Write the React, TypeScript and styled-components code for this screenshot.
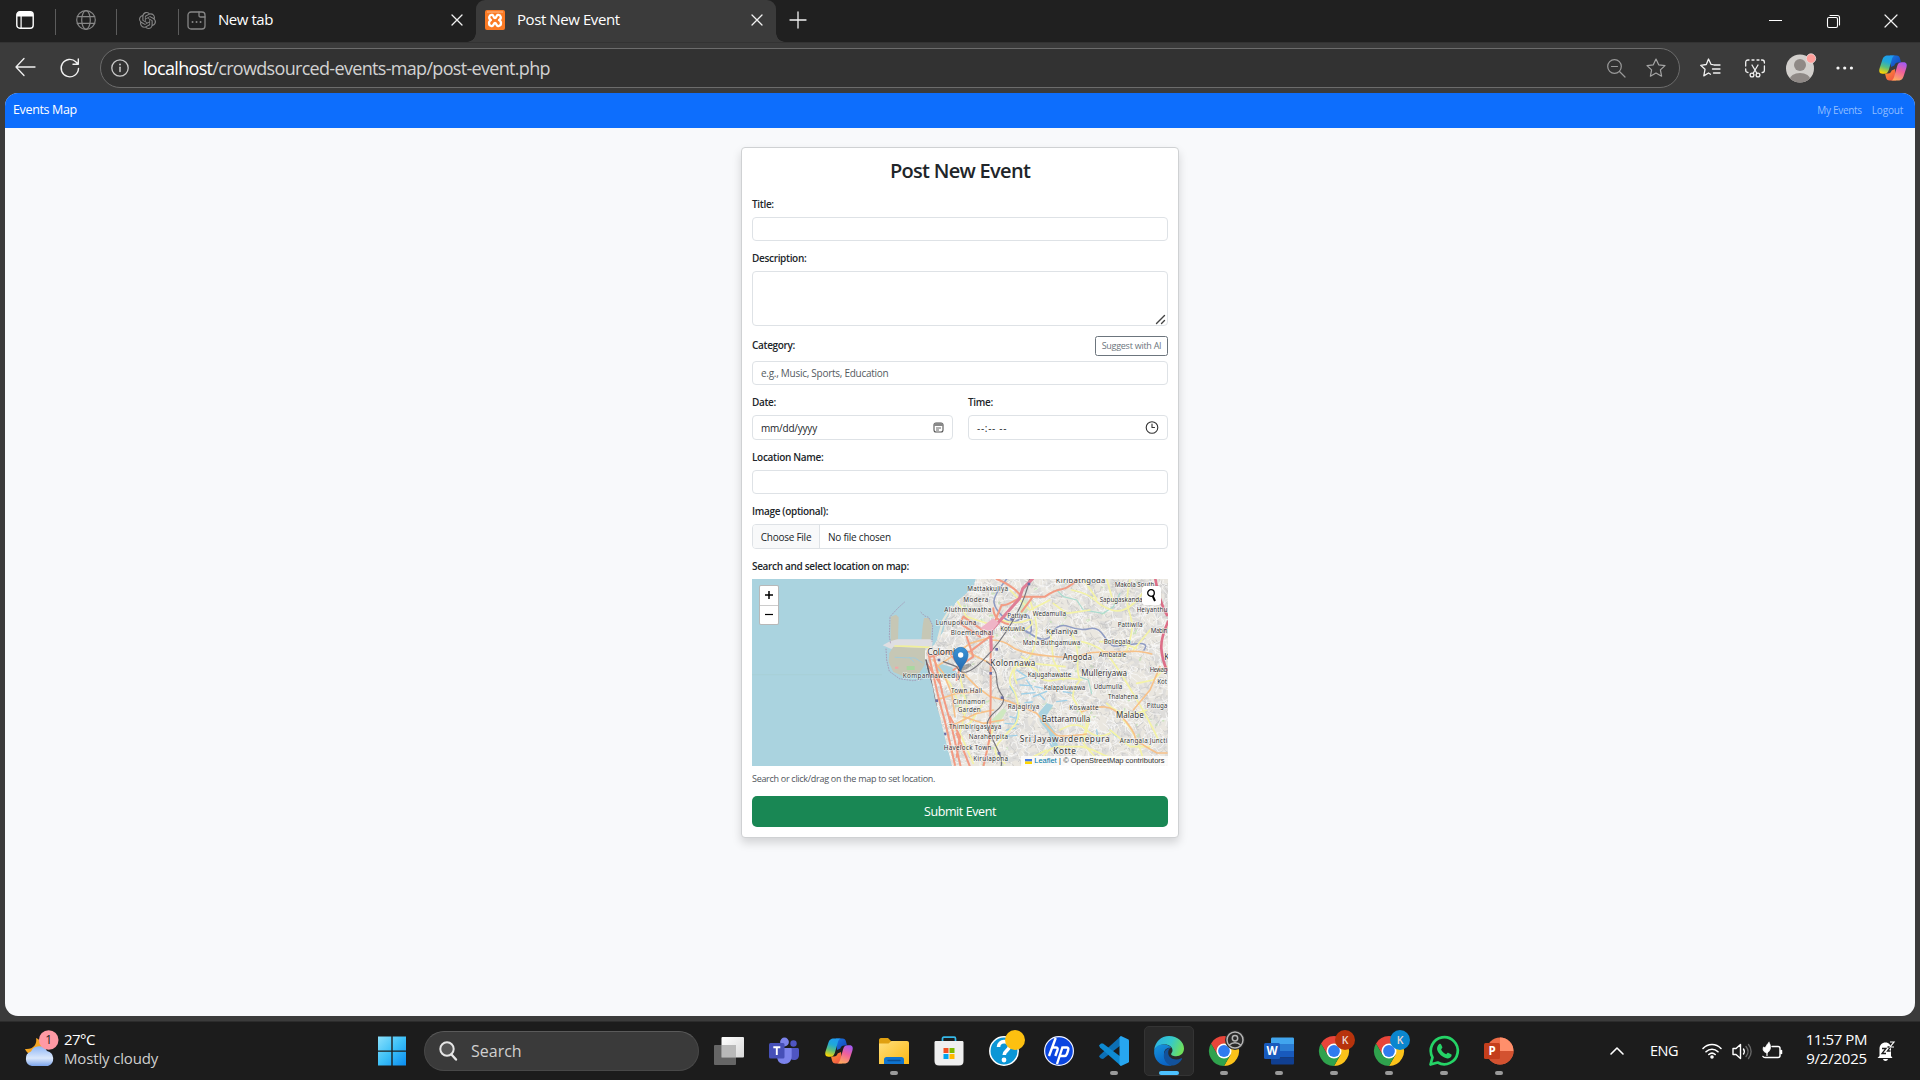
import React from 'react';
import styled, { createGlobalStyle, css } from 'styled-components';
import { SiOpenai } from 'react-icons/si';

const ui = `"Open Sans", "Noto Sans", sans-serif`;

const GlobalStyle = createGlobalStyle`
  * { box-sizing: border-box; }
  html, body { margin: 0; padding: 0; background: #3b3b3b; }
  body { font-family: ${ui}; overflow: hidden; }
  svg { display: block; flex: none; overflow: visible; }
`;

/* ---------- shell ---------- */

const Screen = styled.div`
  width: 1920px;
  height: 1080px;
  display: flex;
  flex-direction: column;
  background: #3b3b3b;
  overflow: hidden;
`;

const Text = styled.span<{ $size: number; $ls?: number; $color?: string; $weight?: number }>`
  font-size: ${p => p.$size}px;
  letter-spacing: ${p => p.$ls ?? 0}px;
  color: ${p => p.$color ?? '#fff'};
  font-weight: ${p => p.$weight ?? 400};
  line-height: 1.3;
  white-space: nowrap;
`;

/* ---------- tab strip ---------- */

const TabStrip = styled.header`
  height: 42px;
  flex: none;
  display: flex;
  align-items: stretch;
  background: #202020;
`;

const PinnedTab = styled.div<{ $w: number; $pad: number }>`
  width: ${p => p.$w}px;
  padding: 0 0 2px ${p => p.$pad}px;
  display: flex;
  align-items: center;
`;

const Divider = styled.i`
  width: 1px;
  height: 26px;
  margin-top: 9px;
  background: #5c5c5c;
`;

const Tab = styled.div<{ $active?: boolean; $w: number }>`
  width: ${p => p.$w}px;
  display: flex;
  align-items: center;
  padding: 0 14px 2px ${p => (p.$active ? 9 : 8)}px;
  gap: 12px;
  position: relative;
  ${p => p.$active && css`
    background: #3b3b3b;
    border-radius: 9px 9px 0 0;
    &::before, &::after {
      content: '';
      position: absolute;
      bottom: 0;
      width: 9px;
      height: 9px;
    }
    &::before { left: -9px; background: radial-gradient(circle at 0 0, transparent 8.5px, #3b3b3b 9px); }
    &::after { right: -9px; background: radial-gradient(circle at 100% 0, transparent 8.5px, #3b3b3b 9px); }
  `}
`;

const TabTitle = styled(Text)`flex: 1;`;

const NewTab = styled.div`
  padding: 0 0 3px 14px;
  display: flex;
  align-items: center;
  flex: 1;
`;

const WindowControls = styled.div`
  display: flex;
  align-items: center;
  gap: 45px;
  padding-right: 23px;
`;

/* ---------- toolbar ---------- */

const Toolbar = styled.div`
  height: 51px;
  flex: none;
  display: flex;
  align-items: center;
  padding-left: 15px;
  border-top: 1px solid #333;
`;

const NavButtons = styled.div`
  width: 85px;
  display: flex;
  gap: 25px;
`;

const AddressBar = styled.div`
  width: 1580px;
  height: 40px;
  border: 1px solid #6c6c6c;
  border-radius: 20px;
  background: #323232;
  display: flex;
  align-items: center;
  padding: 0 13px 0 10px;
`;

const Url = styled.span`
  flex: 1;
  padding: 0 0 1px 14px;
  font-size: 18px;
  letter-spacing: -0.68px;
  color: #d2d2d2;
  line-height: 24px;
  b { font-weight: 400; color: #fff; }
`;

const AddressTools = styled.div`
  display: flex;
  align-items: center;
  gap: 20px;
`;

const ToolbarTools = styled.div`
  display: flex;
  align-items: center;
  padding-left: 20px;
`;

const ToolSlot = styled.div<{ $w: number }>`
  width: ${p => p.$w}px;
  display: flex;
`;

/* ---------- web page ---------- */

const Viewport = styled.main`
  width: 1910px;
  height: 923px;
  margin-left: 5px;
  flex: none;
  display: flex;
  flex-direction: column;
  align-items: center;
  background: #f8f9fb;
  border-radius: 13px;
  overflow: hidden;
`;

const Navbar = styled.nav`
  width: 100%;
  height: 35px;
  flex: none;
  display: flex;
  align-items: center;
  justify-content: space-between;
  padding: 0 12px 0 8px;
  background: #0d6efd;
`;

const NavLinks = styled.div`
  display: flex;
  gap: 10px;
`;

const Card = styled.form`
  width: 438px;
  height: 691px;
  margin-top: 19px;
  padding: 10px;
  display: flex;
  flex-direction: column;
  background: #fff;
  border: 1px solid #cfd1d3;
  border-radius: 4px;
  box-shadow: 0 5px 10px rgba(0, 0, 0, 0.15);
`;

const Heading = styled.h1`
  margin: 0 0 16px;
  height: 24px;
  font-size: 20px;
  font-weight: 600;
  line-height: 25px;
  letter-spacing: -0.7px;
  text-align: center;
  color: #212529;
`;

const Field = styled.div<{ $gap?: number }>`
  display: flex;
  flex-direction: column;
  margin-bottom: ${p => p.$gap ?? 11}px;
`;

const Label = styled.label<{ $flush?: boolean }>`
  height: 14px;
  margin-bottom: ${p => (p.$flush ? 0 : 5)}px;
  font-size: 10px;
  font-weight: 600;
  line-height: 13px;
  letter-spacing: -0.32px;
  color: #212529;
  white-space: nowrap;
`;

const Control = styled.div<{ $h?: number }>`
  height: ${p => p.$h ?? 24}px;
  display: flex;
  align-items: center;
  justify-content: space-between;
  padding: 0 8px;
  border: 1px solid #dee2e6;
  border-radius: 4px;
  background: #fff;
`;

const TextArea = styled(Control)`
  align-items: flex-end;
  justify-content: flex-end;
  padding: 0 2px 1px;
`;

const LabelRow = styled.div`
  height: 20px;
  margin-bottom: 5px;
  display: flex;
  align-items: center;
  justify-content: space-between;
`;

const SuggestButton = styled.div`
  width: 73px;
  height: 20px;
  border: 1px solid #6c757d;
  border-radius: 2.5px;
  display: flex;
  align-items: center;
  justify-content: center;
`;

const Columns = styled.div`
  display: grid;
  grid-template-columns: 201px 200px;
  gap: 15px;
`;

const ControlText = styled(Text)`
  padding-top: 1px;
`;

const FileControl = styled(Control)`
  padding: 0;
  justify-content: flex-start;
  overflow: hidden;
`;

const FileButton = styled.div`
  width: 67px;
  height: 100%;
  display: flex;
  align-items: center;
  justify-content: center;
  background: #f8f9fa;
  border-right: 1px solid #dee2e6;
  margin-right: 8px;
`;

const MapFrame = styled.div`
  width: 416px;
  height: 187px;
  margin-top: 5px;
  position: relative;
  overflow: hidden;
`;

const ZoomControl = styled.div`
  position: absolute;
  left: 7px;
  top: 6px;
  width: 20px;
  height: 40px;
  display: flex;
  flex-direction: column;
  border: 1px solid rgba(0, 0, 0, 0.28);
  border-radius: 2px;
  background: #fff;
`;

const ZoomButton = styled.div`
  flex: 1;
  display: flex;
  align-items: center;
  justify-content: center;
  & + & { border-top: 1px solid #ccc; }
`;

const SearchControl = styled.div`
  position: absolute;
  right: 7px;
  top: 7px;
  width: 19px;
  height: 19px;
  border-radius: 2px;
  background: #fff;
  display: flex;
  align-items: center;
  justify-content: center;
  box-shadow: 0 0 1px rgba(0, 0, 0, 0.5);
`;

const Attribution = styled.div`
  position: absolute;
  right: 0;
  bottom: 0;
  height: 10px;
  width: 147px;
  display: flex;
  align-items: center;
  gap: 2.3px;
  padding-left: 4px;
  background: rgba(255, 255, 255, 0.8);
  font: 7.5px/10px "Liberation Sans", Arial, sans-serif;
  letter-spacing: -0.02px;
  color: #333;
  white-space: nowrap;
  a { color: #0078a8; }
`;

const Help = styled.small`
  margin-bottom: 10px;
  height: 14px;
  font-size: 9px;
  line-height: 14px;
  letter-spacing: -0.29px;
  color: #50565c;
`;

const Submit = styled.div`
  height: 31px;
  padding-top: 1px;
  border-radius: 5px;
  background: #198754;
  display: flex;
  align-items: center;
  justify-content: center;
`;

/* ---------- taskbar ---------- */

const Taskbar = styled.footer`
  height: 59px;
  margin-top: 5px;
  flex: none;
  display: flex;
  align-items: center;
  background: #1c1c1c;
  border-top: 1px solid #2c2c2c;
`;

const Weather = styled.div`
  width: 353px;
  padding: 0 0 4px 24px;
  display: flex;
  align-items: center;
  gap: 8px;
`;

const Lines = styled.div<{ $right?: boolean }>`
  display: flex;
  flex-direction: column;
  align-items: ${p => (p.$right ? 'flex-end' : 'flex-start')};
`;

const ClockLines = styled(Lines)`
  margin-top: -4px;
`;

const StartButton = styled.div`
  width: 71px;
  padding-left: 24px;
`;

const SearchPill = styled.div`
  width: 275px;
  height: 40px;
  border-radius: 20px;
  background: #3a3a3a;
  border: 1px solid #484848;
  border-top-color: #5a5a5a;
  display: flex;
  align-items: center;
  gap: 13px;
  padding-left: 14px;
`;

const Apps = styled.div`
  display: flex;
  margin-left: 5px;
`;

const AppSlot = styled.div<{ $active?: boolean }>`
  width: 50px;
  height: 50px;
  margin-right: 5px;
  padding-top: 9px;
  border-radius: 5px;
  border: 1px solid ${p => (p.$active ? '#343434' : 'transparent')};
  background: ${p => (p.$active ? '#292929' : 'transparent')};
  display: flex;
  flex-direction: column;
  align-items: center;
  gap: 5px;
`;

const Running = styled.i<{ $active?: boolean }>`
  width: ${p => (p.$active ? 20 : 8)}px;
  height: 4px;
  border-radius: 2px;
  background: ${p => (p.$active ? '#4cc2ff' : '#9a9a9a')};
`;

const Tray = styled.div`
  margin-left: auto;
  display: flex;
  align-items: center;
  padding-right: 25px;
`;

const TraySlot = styled.div<{ $w: number; $end?: boolean }>`
  width: ${p => p.$w}px;
  display: flex;
  align-items: center;
  justify-content: ${p => (p.$end ? 'flex-end' : 'flex-start')};
  padding-right: ${p => (p.$end ? 10 : 0)}px;
`;

/* ---------- small icons ---------- */

const line = (color: string, w = 1.3) => ({
  fill: 'none', stroke: color, strokeWidth: w, strokeLinecap: 'round' as const, strokeLinejoin: 'round' as const,
});

const CloseIcon = ({ s = 10, w = 1.3 }) => (
  <svg width={s} height={s} viewBox="0 0 10 10" {...line('#f2f2f2', w)}><path d="M0 0 10 10M10 0 0 10" /></svg>
);

const TabActionsIcon = () => (
  <svg width="18" height="18" viewBox="0 0 18 18">
    <rect x=".8" y=".8" width="16.4" height="16.4" rx="3" {...line('#fff', 1.4)} />
    <path d="M1 3.500C1 2 2 1 3.500 1h11C16 1 17 2 17 3.500V5.500H1zM4.500 5h1.200v12h-1.200z" fill="#fff" />
  </svg>
);

const GlobeIcon = () => (
  <svg width="20" height="20" viewBox="0 0 20 20" {...line('#868686', 1.2)}>
    <circle cx="10" cy="10" r="9.300" /><ellipse cx="10" cy="10" rx="4.300" ry="9.300" /><path d="M1.300 6.700h17.400M1.300 13.300h17.400" />
  </svg>
);

const PageIcon = () => (
  <svg width="19" height="19" viewBox="0 0 19 19" {...line('#868686', 1.3)}>
    <rect x="1" y="1" width="17" height="17" rx="3" /><path d="M12 1v3.500C12 5.500 12.500 6 13.500 6H18" />
    <path d="M5.500 11h.1M9.500 11h.1M13.500 11h.1" strokeWidth="1.900" />
  </svg>
);

const XamppIcon = () => (
  <svg width="20" height="20" viewBox="0 0 20 20">
    <rect width="20" height="20" rx="2" fill="#fb7a24" /><path d="M2 2h16" stroke="#fdb98b" strokeWidth="1" />
    <path d="M7.300 5C4 4.500 3 8.500 6 10c-3 1.500-2.500 6.500 1 6 2-.3 1.500-3 3-3s1 2.700 3 3c3.500.5 4-4.500 1-6 3-1.500 2-5.500-1.300-5C11 5.300 11.700 8 10 8S9 5.300 7.300 5z" {...line('#fff', 2.3)} />
  </svg>
);

const InfoIcon = () => (
  <svg width="18" height="18" viewBox="0 0 18 18" {...line('#c9c9c9', 1.3)}>
    <circle cx="9" cy="9" r="8.200" /><path d="M9 8.300v4.200" strokeWidth="1.500" /><path d="M9 5.500v.1" strokeWidth="1.900" />
  </svg>
);

const star = 'M10 1l2.700 5.800 6.300.8-4.600 4.300 1.200 6.300L10 15.100l-5.600 3.100 1.200-6.300L1 7.600l6.300-.8z';

const AvatarIcon = () => (
  <svg width="32" height="30" viewBox="0 0 32 30">
    <clipPath id="av"><circle cx="14" cy="15.500" r="14" /></clipPath>
    <circle cx="14" cy="15.500" r="14" fill="#d2cfcc" />
    <g clipPath="url(#av)" fill="#8f8986"><circle cx="14" cy="12" r="6" /><ellipse cx="14" cy="27" rx="10.500" ry="7" /></g>
    <circle cx="25" cy="5.500" r="4.700" fill="#ff9f9b" stroke="#e6dede" strokeWidth=".8" />
  </svg>
);

const CopilotIcon = ({ id }: { id: string }) => (
  <svg width="28" height="26" viewBox="0 0 28 26">
    <defs>
      <linearGradient id={id + 'a'} x1=".6" y1="0" x2=".3" y2="1"><stop stopColor="#1f9cf0" /><stop offset=".35" stopColor="#20a8d8" /><stop offset=".65" stopColor="#5bbf7c" /><stop offset="1" stopColor="#ffd500" /></linearGradient>
      <linearGradient id={id + 'b'} x1=".7" y1="0" x2=".3" y2="1"><stop stopColor="#a55af0" /><stop offset=".45" stopColor="#f0609a" /><stop offset="1" stopColor="#ffae5c" /></linearGradient>
      <linearGradient id={id + 'c'} x1="0" y1="0" x2="1" y2="1"><stop stopColor="#1a78e0" /><stop offset="1" stopColor="#1540b8" /></linearGradient>
      <linearGradient id={id + 'd'} x1="0" y1="0" x2="1" y2="1"><stop stopColor="#ff9a2e" /><stop offset="1" stopColor="#ef4a4a" /></linearGradient>
    </defs>
    <path d="M11 .5h6.500c2 0 3 1 3.500 3l1 4h-3c-2 0-3 1-3.700 3L12 12z" fill={`url(#${id}c)`} />
    <path d="M17 25.500h-6.500c-2 0-3-1-3.500-3l-1-4h3c2 0 3-1 3.700-3L16 14z" fill={`url(#${id}d)`} />
    <path d="M9 .5h7.500c-2.500 0-3 2-3.700 4l-3 10.500c-1 3-2.300 3.700-4.600 3.700H3.500C.2 18.700-.3 16 .7 13L3.300 5C4.300 2 5.500.5 9 .5z" fill={`url(#${id}a)`} />
    <path d="M19 25.500h-7.500c2.500 0 3-2 3.700-4l3-10.500c1-3 2.300-3.700 4.600-3.700h1.700c3.300 0 3.800 2.700 2.800 5.700L24.700 21c-1 3-2.200 4.500-5.700 4.500z" fill={`url(#${id}b)`} />
  </svg>
);

/* ---------- map ---------- */

type Label = [string, number, number, number, number?, boolean?];

// name, left, right, vertical centre, font size, runs up to the frame
const places: Label[] = [
  ['Mattakkuliya', 52, 174, 56], ['Modera', 40, 115, 89], ['Aluthmawatha', -17, 124, 118], ['Lunupokuna', -43, 79, 157],
  ['Bloemendhal', 2, 130, 187], ['Colombo', -68, 40, 246, 26], ['Kompannaweediya', -142, 44, 317], ['Town Hall', 3, 96, 362],
  ['Cinnamon', 8, 106, 394], ['Garden', 23, 92, 420], ['Thimbirigasyaya', -3, 154, 470], ['Narahenpita', 56, 174, 500],
  ['Havelock Town', -19, 124, 534], ['Kirulapona', 70, 174, 566], ['Pattiya', 172, 231, 136], ['Kotuwila', 151, 225, 176],
  ['Wedamulla', 248, 348, 130], ['Kelaniya', 288, 383, 183, 23], ['Maha Buthgamuwa', 218, 391, 217], ['Kiribathgoda', 317, 466, 30, 23],
  ['Makola South', 494, 613, 45], ['Sapugaskanda', 449, 578, 88], ['Heiyanthu', 560, 652, 118], ['Pattiwila', 503, 578, 164],
  ['Mabin', 602, 652, 181], ['Bollegala', 461, 542, 215], ['Ambatale', 446, 529, 253], ['Angoda', 338, 426, 261, 24],
  ['Kolonnawa', 121, 256, 279, 24], ['Kajugahawatte', 233, 364, 314], ['Mulleriyawa', 394, 531, 309, 24], ['Hewag', 599, 652, 300],
  ['Kot', 622, 651, 334], ['K', 643, 653, 263, 24, true], ['Kalapaluwawa', 281, 406, 354], ['Udumulla', 431, 517, 349],
  ['Thalahena', 474, 564, 379], ['Rajagiriya', 173, 268, 409], ['Koswatte', 358, 446, 414], ['Pittuga', 590, 652, 406],
  ['Battaramulla', 275, 421, 447, 24], ['Malabe', 498, 581, 437, 24], ['Sri Jayawardenepura', 209, 479, 507, 25], ['Kotte', 310, 378, 544, 25],
  ['Arangala Juncti', 509, 652, 511],
];

const coast = 'M80 20 L70 50 50 70 20 95 5 118 -12 150 -20 185 -35 205 -48 225 -75 240 -75 270 -68 300 -52 350 -45 390 -30 440 -12 515 8 595 H660 V20 Z';

// Small seeded generator, so the street pattern is the same on every load.
const seeded = (seed: number) => () => {
  seed = (seed * 1664525 + 1013904223) % 4294967296;
  return seed / 4294967296;
};

const scatter = (seed: number, count: number, min: number, max: number) => {
  const r = seeded(seed);
  let d = '';
  for (let i = 0; i < count; i++) {
    const x = -70 + r() * 730, y = 22 + r() * 570, a = r() * 6.3, l = min + r() * (max - min), b = a + (r() > 0.5 ? 1.5 : 0.5);
    d += `M${x.toFixed(0)} ${y.toFixed(0)}l${(Math.cos(a) * l).toFixed(0)} ${(Math.sin(a) * l).toFixed(0)} ${(Math.cos(b) * l * 0.8).toFixed(0)} ${(Math.sin(b) * l * 0.8).toFixed(0)}`;
  }
  return d;
};
const streets = scatter(7, 1300, 8, 28);
const streetEdges = scatter(31, 1500, 5, 16);
const greens = scatter(90, 90, 3, 8);
const blocks = scatter(55, 520, 12, 26);

const yellowRoads = [
  'M0 70l-30 60-40 80M20 90l30 50 60 20M150 150q50 14 78 2q20-10 18 10q-20 22-40 20t-50-8M240 90q20 60 20 90t-10 60-40 40-10 60',
  'M365 60q50 10 70 30t50 30 60 -15 40-50M400 27l40 60M470 27l20 70M540 30q-14 60-4 90t10 50-12 60-40 30',
  'M365 190q20 40 18 80t7 60q-30 40-18 60t30 50-10 70M395 215q60 12 90 55t40 60 30 50 40 70 30 60M195 290q60-10 70 20t50 20 80 0',
  'M195 290q-25 40-10 60t20 60-15 60-45 50 20 60M215 260l30 20 100 10M300 180l10 90 30 60M450 215l50 0 60 20',
  'M270 580q20-50 60-50t60 0 60 20 60 10M330 480q50-30 80 0t70 10M420 440l-20 80 60 70M560 340l50-10 40-40M600 180l-50 60',
  'M30 320l20 90-20 80 40 90M-40 300l40 40 40 90M100 400l-40 60-50 20M470 400q50 50 120 20M130 470l-20 80M230 570l60-30',
  'M520 450q40 40 60 120M310 100l40 30 70-10M180 60l60 60 60-30M480 480l60 50 60 0',
];
const orangeRoads = [
  'M125 210q35 0 60 20t110 28 100-2 70-10 80-2 60 8M30 300l50 50 40 30 60 15 80 35M260 430q50 60 60 66t90-4',
  'M-50 270l30 40 25 60 10 70M0 470l80-40 50-10M-40 390l60-20 70 -5M395 425q40-16 70-14t60 40 30 50 66 48h30M630 290l-30 70-50 60',
  'M-40 290l60-40 40-30 70-20M40 440l60 20 60-10M60 250l60 30',
];
const redRoads = [
  'M140 27q50 20 75 53h70q30-20 50-22t60-40M215 80q-50 30-60 25l-25 60-10 30M245 85l-30 40M125 200l-85-60-10 20 60 40M130 115q0 35 45 48',
  'M-65 250l30 130 20 75 30 130M-48 260l25 110 30 110 25 110M-60 260l60-15 60 0 65-50M-70 280l40 60M20 560l10-60-30-60M122 200l0 190-2 110 -20 90',
  'M0 250l30 40-10 40M50 200l20 60-60 40M20 490l40 100',
];

const MapDrawing = () => (
  <svg width="416" height="187" viewBox="-594 27 1248 561" preserveAspectRatio="none">
    <defs><clipPath id="land"><path d={coast} /></clipPath>
      <linearGradient id="pin" x1="0" y1="0" x2="0" y2="1"><stop stopColor="#3a93d6" /><stop offset="1" stopColor="#2468ae" /></linearGradient></defs>
    <rect x="-594" y="20" width="1260" height="575" fill="#aad3df" />
    <path d="M-594 314h390" stroke="#a9cfd0" strokeWidth="1.500" />
    {/* harbour */}
    <path d="M-178 140l16-6 8 8-2 66-6 20-16-8zM-86 212l4-44 4-24 14 0 10 20-4 48z" fill="#c6c7b5" />
    <path d="M-180 214l22-6h98l8 4-2 20-26 8-98-4-24-10z" fill="#dedee2" />
    <path d="M-170 230l96 4-2 50-16 26-44 10-34-14-14-30 2-26z" fill="#c6c7b5" />
    <path d="M-165 228l45 1 60 3 6 20-12 30" {...line('#f0ef9a', 5)} />
    <path d="M-165 262l60 2 22 14M-122 262l14 14" {...line('#9ccbe0', 2.5)} />
    <path d="M-130 288h24v12h-24z" fill="#a8d8a0" /><path d="M-165 290h10v6h-10z" fill="#f2a6a6" />
    <path d="M-136 96l-20 18-24 26-2 60 4 22M-88 126l12 12 12 4 12 24-2 50M-192 236l2 34 8 34 30 22 40 6 30-4" fill="none" stroke="#a291b0" strokeWidth="2.500" strokeDasharray="5 3" />
    <path d="M5 110l-25 40-15 55" {...line('#e9e6da', 7)} />
    <g clipPath="url(#land)">
      <rect x="-100" y="20" width="760" height="580" fill="#eae7e0" />
      <path d={blocks} fill="#dbdad8" stroke="#dedddb" strokeWidth="9" />
      <path d={greens} fill="none" stroke="#c9e3ba" strokeWidth="5" />
      <path d={streetEdges} fill="none" stroke="#c6c5c5" strokeWidth="2" />
      <path d={streets} fill="none" stroke="#fafafa" strokeWidth="2.200" />
      {/* lakes and marsh */}
      <path d="M-45 292l20-10 30 10 20 18-10 14-30-2-20-14z" fill="#aad3df" />
      <path d="M265 430l25-30 20 5-25 40 30 40 10 50-15 0-15-50-25-30z" fill="#aad3df" />
      <path d="M200 330l25-8M210 345l35 2M215 372l40-4M230 330l20 30M200 300l30 20M250 380l40-16M180 440l25 6M165 460l40 3M170 480l28-6M180 350l20 30M205 420l-10 40M255 350l25 5M270 375l14 14M340 365l30 5M440 480l6 40M300 520l20 30M225 398l22 -2M160 500l40-4M320 395l30 -4M480 480l20 20" {...line('#9fd0e8', 4)} />
      <path d="M125 450l35-35 10 8-25 40z" fill="#cfe8c0" /><path d="M220 85l14 10-20 50-6-30z" fill="#d5e8c8" />
      <path d="M320 60l20 20 40 10 20 30 60 10 30-20 20-40M385 320l30 10 10 40" {...line('#a9dccf', 3.5)} />
      <path d="M170 27q-40 50-38 70t30 46 50 0 30 16-15 25 20 11 60-5 50-20 60 6 45 22 30 30 60-6 30 18" {...line('#8f9cc4', 4.5)} />
      {yellowRoads.map(d => <path key={d} d={d} {...line('#f4f3a6', 5)} />)}
      {orangeRoads.map(d => <path key={d} d={d} {...line('#f7c189', 5)} />)}
      {redRoads.map(d => <path key={d} d={d} {...line('#f29b83', 6)} />)}
      <path d="M240 20q-10 60-50 130t-95 125-75 15l-40-15M110 275q30 20 30 50t16 50-20 50-20 60 30 60 5 50" {...line('#77767c', 3.5)} />
      <path d="M-72 270l12 50 26 125 15 60 22 90" {...line('#66656f', 5)} strokeDasharray="9 3" />
      <path d="M122 184l86-98 10-30 30-30M122 180l2 60" {...line('#df7f96', 9)} />
      <path d="M90 175l40-30 16 14-22 26z" fill="#efb4c6" />
      <path d="M615 20q10 70 36 115M654 155q-22 50-20 80t16 65" {...line('#dd6f88', 8)} />
      <g fill="#6b6fa8">{[[237, 42], [185, 148], [140, 238], [122, 310], [156, 383], [-58, 320], [-40, 392], [-15, 492], [147, 550], [-33, 270]].map(([x, y]) => <rect key={x} x={x - 4} y={y - 4} width="8" height="8" />)}</g>
    </g>
    <g fontFamily='"Noto Sans", sans-serif' fill="#383838" stroke="#fff" strokeOpacity=".6" strokeWidth="4" paintOrder="stroke" strokeLinejoin="round">
      {places.map(([t, x1, x2, y, s = 19, natural]) => (
        <text key={t} x={x1} y={y + s * 0.35} fontSize={s} textLength={natural ? undefined : x2 - x1}>{t}</text>
      ))}
    </g>
    <ellipse cx="44" cy="292" rx="22" ry="7" fill="#000" opacity=".3" transform="rotate(-25 44 292)" />
    <path d="M32 305C28 285 10 275 10 254a22 22 0 0 1 44 0C54 275 36 285 32 305z" fill="url(#pin)" stroke="#2a6fad" strokeWidth="2" />
    <circle cx="32" cy="255" r="8" fill="#fff" />
  </svg>
);

/* ---------- taskbar icons ---------- */

const ChromeIcon = ({ badge, letter }: { badge: string; letter?: string }) => (
  <svg width="30" height="30" viewBox="0 0 30 30">
    <path d="M15 0A15 15 0 0 0 2 7.500l6.500 11.200L15 7.500h13A15 15 0 0 0 15 0z" fill="#e8453a" />
    <path d="M28 7.500H15l6.500 11.300L15 30A15 15 0 0 0 28 7.500z" fill="#fcc31a" />
    <path d="M2 7.500A15 15 0 0 0 15 30l6.400-11.200L8.500 18.700z" fill="#2fa24d" />
    <circle cx="15" cy="15" r="7.500" fill="#fff" /><circle cx="15" cy="15" r="5.900" fill="#2f7bf0" />
    <circle cx="26" cy="4" r="10" fill={badge} />
    {letter
      ? <text x="26" y="7.800" textAnchor="middle" fontSize="10.500" fontFamily={ui} fontWeight="600" fill="#ecd9d0">{letter}</text>
      : <g {...line('#b5b5b5', 1.500)}><circle cx="26" cy="4" r="8" /><circle cx="26" cy="2.300" r="2.700" /><path d="M20.500 9c2.500-3 8.500-3 11 0" /></g>}
  </svg>
);

const OfficeIcon = ({ letter, tile, children }: { letter: string; tile: string; children: React.ReactNode }) => (
  <svg width="30" height="30" viewBox="0 0 30 30">
    {children}
    <rect x="0" y="7" width="16" height="16" rx="1.500" fill={tile} />
    <text x="8" y="18.800" textAnchor="middle" fontSize="11.500" fontWeight="700" fontFamily={ui} fill="#fff">{letter}</text>
  </svg>
);

const apps: { name: string; run?: boolean; active?: boolean; icon: React.ReactNode }[] = [
  { name: 'taskview', icon: (
    <svg width="30" height="30" viewBox="0 0 30 30"><defs><linearGradient id="tv" x2="1" y2="1"><stop stopColor="#fff" /><stop offset="1" stopColor="#d8d8d8" /></linearGradient></defs>
      <rect x="7.500" y="1" width="22.500" height="20.500" rx="1" fill="url(#tv)" /><rect x="0" y="9" width="22" height="20" rx="1" fill="#6e6e6e" opacity=".9" /><rect x="7.500" y="9" width="14.500" height="12.500" fill="#b9b9b9" /></svg>) },
  { name: 'teams', icon: (
    <svg width="30" height="30" viewBox="0 0 30 30"><circle cx="24.500" cy="7.500" r="3.200" fill="#4f55c2" /><path d="M19 12h9.500c.8 0 1.500.6 1.500 1.500V19c0 3-2 5-5 5s-5-2-6-4z" fill="#4f55c2" />
      <circle cx="15.500" cy="6" r="4.400" fill="#7b83eb" /><path d="M9 12h12.500c.7 0 1.200.5 1.200 1.200V20c0 5-3 8-7.500 8S8 25 8 20z" fill="#7b83eb" />
      <rect x="0" y="7" width="15.500" height="15.500" rx="1.500" fill="#4650b8" /><path d="M4.300 11.300h7M7.800 11.300v7.700" stroke="#fff" strokeWidth="1.900" /></svg>) },
  { name: 'copilot', icon: <svg width="30" height="30" viewBox="-1 -2 30 30"><CopilotIcon id="ct" /></svg> },
  { name: 'explorer', run: true, icon: (
    <svg width="30" height="30" viewBox="0 0 30 30"><defs><linearGradient id="ex" x2="1" y2="1"><stop stopColor="#ffdf7c" /><stop offset="1" stopColor="#fdb913" /></linearGradient></defs>
      <path d="M0 4c0-1 .7-2 2-2h7l3.500 3.500V8H0z" fill="#e0a010" /><path d="M0 7.500h9.500L12.500 5H28c1.200 0 2 .8 2 2v21H0z" fill="url(#ex)" />
      <path d="M5 28v-4.500c0-1.500 1-2.500 2.500-2.500h15c1.500 0 2.500 1 2.500 2.500V28z" fill="#0f74d0" /><path d="M9 24.500h12" stroke="#0b4f94" strokeWidth="1.300" strokeLinecap="round" /></svg>) },
  { name: 'store', icon: (
    <svg width="30" height="30" viewBox="0 0 30 30"><path d="M8.500 8V2.500c0-.8.500-1.300 1.300-1.300h10.400c.8 0 1.300.5 1.300 1.300V8" fill="none" stroke="#35b8e8" strokeWidth="1.700" />
      <path d="M.5 6.500c0-1 .5-1.500 1.500-1.500h26c1 0 1.500.5 1.500 1.500V25c0 3-1.500 4.500-4.500 4.500H5C2 29.500.5 28 .5 25z" fill="#efefef" />
      <path d="M9.500 12h5v5h-5z" fill="#f25022" /><path d="M15.500 12h5v5h-5z" fill="#7fba00" /><path d="M9.500 18h5v5h-5z" fill="#00a4ef" /><path d="M15.500 18h5v5h-5z" fill="#ffb900" /></svg>) },
  { name: 'help', icon: (
    <svg width="30" height="30" viewBox="0 0 30 30"><circle cx="15" cy="15" r="14.200" fill="#0b96d6" stroke="#fff" strokeWidth="1.500" />
      <path d="M9.500 11c0-7 11-7 11-.8 0 4-5.300 4.300-5.300 8.800" fill="none" stroke="#fff" strokeWidth="3.600" /><circle cx="15" cy="24" r="2.400" fill="#fff" /><circle cx="26" cy="4" r="10" fill="#fdc010" /></svg>) },
  { name: 'hp', icon: (
    <svg width="30" height="30" viewBox="0 0 30 30"><circle cx="15" cy="15" r="14.400" fill="#0a45e0" stroke="#f2f4ff" strokeWidth="1.200" />
      <path d="M11.700 2 5 20M8.300 11.500h3.500c1.700 0 2.200 1 1.700 2.500L11.300 20M18.700 10.500 13 28M18.500 11.500h4c1.700 0 2.200 1 1.700 2.500l-1.300 4c-.5 1.300-1.200 2-2.500 2h-4.200" fill="none" stroke="#fff" strokeWidth="2.400" /></svg>) },
  { name: 'vscode', run: true, icon: (
    <svg width="30" height="30" viewBox="0 0 30 30"><path d="M22 0 1 19l-1 1.500 1.800 2L4 23 22 9z" fill="#0c6fb5" /><path d="M22 30 1 11.500 0 9.500l2-2L4 7.500 22 21z" fill="#0e8ad2" />
      <path d="M22 0l7 3.300c.6.300 1 .8 1 1.500v20.400c0 .7-.4 1.200-1 1.500L22 30l-1.500-1.200V1.200z" fill="#27a6f0" /></svg>) },
  { name: 'edge', run: true, active: true, icon: (
    <svg width="30" height="30" viewBox="0 0 30 30"><defs><linearGradient id="eg" x1="0" x2="1" y1=".2" y2=".5"><stop stopColor="#2bb2e4" /><stop offset=".55" stopColor="#36c9c9" /><stop offset="1" stopColor="#6fe05a" /></linearGradient>
      <linearGradient id="eb" x2=".4" y2="1"><stop stopColor="#1795dd" /><stop offset="1" stopColor="#0a64c4" /></linearGradient></defs>
      <path d="M.2 14C1 6 7 0 15 0c8.500 0 15 6 15 12.500 0 5-3.800 7.700-7.800 7.700-3.500 0-5.500-1.200-5-2.500.5-1 1.300-1.700 1.300-3.500 0-3.200-3.300-5.700-7.500-5.700C6 8.500 2 10.500.2 14z" fill="url(#eg)" />
      <path d="M.2 14C2 9.500 6.500 8 10.500 8.500c4 .5 6.500 2.500 6.500 3.500-3.500-.8-7 1.500-7 6C10 23 13 28 18 29.500 8 31.500-1 25 .2 14z" fill="url(#eb)" />
      <path d="M10.500 16c-2.500 6 2 14 8.500 13.500 4-.5 7.500-3.500 9-6.500.3-.7-.3-1-.8-.7-6 3-13 0-13-5.500 0-2.500 1-4 2.500-4.800-2.500-.5-5.200 1.500-6.200 4z" fill="#12529c" /></svg>) },
  { name: 'chrome', run: true, icon: <ChromeIcon badge="#2a2a2a" /> },
  { name: 'word', run: true, icon: (
    <OfficeIcon letter="W" tile="#185abd"><path d="M7 3c0-1 .5-1.500 1.500-1.500h20c1 0 1.500.5 1.500 1.500v5H7z" fill="#41a5ee" /><path d="M7 8h23v7H7z" fill="#2b7cd3" /><path d="M7 15h23v6.500H7z" fill="#185abd" /><path d="M7 21.500h23V27c0 1-.5 1.500-1.500 1.500h-20C7.500 28.500 7 28 7 27z" fill="#103f91" /></OfficeIcon>) },
  { name: 'chrome-red', run: true, icon: <ChromeIcon badge="#b7330c" letter="K" /> },
  { name: 'chrome-blue', run: true, icon: <ChromeIcon badge="#0b86cf" letter="K" /> },
  { name: 'whatsapp', run: true, icon: (
    <svg width="30" height="30" viewBox="0 0 30 30"><path d="M1.500 28.500l2-7.200A13.500 13.500 0 1 1 8.700 26.500z" fill="none" stroke="#25d366" strokeWidth="2.700" strokeLinejoin="round" />
      <path d="M10.300 8c.7-.5 1.500-.3 1.800.4l1.200 2.700c.2.600-.1 1.200-1.200 2.400 1.300 2.400 2.900 3.900 5.200 4.800 1.200-1.500 1.600-1.700 2.200-1.400l2.600 1.300c.6.300.7.800.4 1.700-.6 1.700-2.400 2.600-4 2.500-5-.6-9.400-5-10.400-8.900-.4-2 .6-4.300 2.200-5.500z" fill="#25d366" /></svg>) },
  { name: 'powerpoint', run: true, icon: (
    <OfficeIcon letter="P" tile="#c43e1c"><circle cx="16" cy="15" r="13.500" fill="#ed6c47" /><path d="M16 1.500A13.500 13.500 0 0 1 29.500 15H16z" fill="#ff8f6b" /><path d="M2.500 15h27a13.500 13.500 0 0 1-27 0z" fill="#d35230" /></OfficeIcon>) },
];

const WeatherIcon = () => (
  <svg width="32" height="34" viewBox="0 0 32 34">
    <defs><linearGradient id="cl" x2="0" y2="1"><stop stopColor="#8fb6f5" /><stop offset=".6" stopColor="#dbe8fb" /><stop offset="1" stopColor="#7ba4ec" /></linearGradient></defs>
    <path d="M12 6c1.500 6-3 12-11 11 2 5 8 8 13 5s7-12-2-16z" fill="#f5a623" />
    <path d="M8 34a7.500 7.500 0 0 1-1-14.500A9 9 0 0 1 23 19a7.800 7.800 0 0 1 1 15z" fill="url(#cl)" />
    <circle cx="24.700" cy="8" r="9.800" fill="#ff99a4" />
    <text x="24.700" y="12.200" textAnchor="middle" fontSize="12" fontFamily={ui} fill="#222">1</text>
  </svg>
);

const LabelledField = ({ label, children }: { label: string; children: React.ReactNode }) => (
  <Field><Label>{label}</Label>{children}</Field>
);

export default function App() {
  return (
    <Screen>
      <GlobalStyle />
      <TabStrip>
        <PinnedTab $w={55} $pad={16}><TabActionsIcon /></PinnedTab>
        <Divider />
        <PinnedTab $w={60} $pad={20}><GlobeIcon /></PinnedTab>
        <Divider />
        <PinnedTab $w={61} $pad={22}><SiOpenai size={17} color="#868686" /></PinnedTab>
        <Divider />
        <Tab $w={297}>
          <PageIcon />
          <TabTitle $size={15} $ls={-0.45}>New tab</TabTitle>
          <CloseIcon />
        </Tab>
        <Tab $w={300} $active>
          <XamppIcon />
          <TabTitle $size={15} $ls={-0.42}>Post New Event</TabTitle>
          <CloseIcon />
        </Tab>
        <NewTab><svg width="16" height="16" viewBox="0 0 16 16" {...line('#f2f2f2', 1.3)}><path d="M8 0v16M0 8h16" /></svg></NewTab>
        <WindowControls>
          <svg width="13" height="13" viewBox="0 0 13 13"><path d="M0 5.500h13" stroke="#fff" /></svg>
          <svg width="13" height="13" viewBox="0 0 13 13" {...line('#fff', 1.1)}><rect x=".5" y="2.500" width="10" height="10" rx="1.500" /><path d="M3 .5h7.500c1.300 0 2 .7 2 2V10" /></svg>
          <CloseIcon s={12} w={1} />
        </WindowControls>
      </TabStrip>

      <Toolbar>
        <NavButtons>
          <svg width="20" height="18" viewBox="0 0 20 18" {...line('#f0f0f0', 1.3)}><path d="M9 0.500 1 9l8 8.500M1 9h19" /></svg>
          <svg width="20" height="20" viewBox="0 0 20 20" {...line('#f0f0f0', 1.4)}><path d="M18.500 10.500A8.700 8.700 0 1 1 16 4l2 2M18.300 1v5.200H13" /></svg>
        </NavButtons>
        <AddressBar>
          <InfoIcon />
          <Url><b>localhost</b>/crowdsourced-events-map/post-event.php</Url>
          <AddressTools>
            <svg width="19" height="19" viewBox="0 0 19 19" {...line('#9a9a9a', 1.2)}><circle cx="7.500" cy="7.500" r="6.800" /><path d="M12.500 12.500l5.500 5.500M4.500 7.500h6" /></svg>
            <svg width="20" height="20" viewBox="0 0 20 20" {...line('#a5a5a5', 1.2)}><path d={star} /></svg>
          </AddressTools>
        </AddressBar>
        <ToolbarTools>
          <ToolSlot $w={45}><svg width="20" height="20" viewBox="0 0 20 20" {...line('#f0f0f0', 1.3)}><path d="M13 6.600 11 6.300 8.500 1 6.300 6.500.7 7.300l4.300 4-1.200 6.600L8.500 15l2 1.200M14 7h6M12.500 11h7.500M13.500 15h6.500" /></svg></ToolSlot>
          <ToolSlot $w={41}><svg width="20" height="19" viewBox="0 0 20 19" {...line('#f0f0f0', 1.3)}>
            <path d="M3 13.500c-1.500 0-2.300-.8-2.300-2.300V10M.7 7V3.500C.7 2 1.500 1 3 1h1M7 1h2M12 1h2M16.500 1h.7c1.500 0 2.200 1 2.200 2.500V4M19.400 7v4.200c0 1.500-.8 2.300-2.300 2.300M7 6l5 8.500M13 6l-5 8.500" />
            <circle cx="7" cy="16" r="1.900" /><circle cx="13" cy="16" r="1.900" /></svg></ToolSlot>
          <ToolSlot $w={50}><AvatarIcon /></ToolSlot>
          <ToolSlot $w={43}><svg width="18" height="4" viewBox="0 0 18 4" fill="#f5f5f5"><circle cx="2" cy="2" r="1.600" /><circle cx="8.700" cy="2" r="1.600" /><circle cx="15.400" cy="2" r="1.600" /></svg></ToolSlot>
          <CopilotIcon id="cp" />
        </ToolbarTools>
      </Toolbar>

      <Viewport>
        <Navbar>
          <Text $size={12.5} $ls={-0.36}>Events Map</Text>
          <NavLinks>
            <Text $size={10} $ls={-0.3} $color="#92beff">My Events</Text>
            <Text $size={10} $ls={-0.2} $color="#92beff">Logout</Text>
          </NavLinks>
        </Navbar>
        <Card>
          <Heading>Post New Event</Heading>
          <LabelledField label="Title:"><Control /></LabelledField>
          <Field $gap={10}>
            <Label>Description:</Label>
            <TextArea $h={55}>
              <svg width="9" height="9" viewBox="0 0 9 9" {...line('#444', 1.4)}><path d="M.5 8.500l8-8M5.500 8.500l3-3" /></svg>
            </TextArea>
          </Field>
          <Field>
            <LabelRow>
              <Label $flush>Category:</Label>
              <SuggestButton><Text $size={9} $ls={-0.26} $color="#6c757d">Suggest with AI</Text></SuggestButton>
            </LabelRow>
            <Control><ControlText $size={10} $ls={-0.27} $color="#555b61">e.g., Music, Sports, Education</ControlText></Control>
          </Field>
          <Columns>
            <LabelledField label="Date:">
              <Control $h={25}>
                <ControlText $size={10} $ls={-0.22} $color="#212529">mm/dd/yyyy</ControlText>
                <svg width="11" height="11" viewBox="0 0 11 11"><rect x="1" y="1" width="9" height="9" rx="2" {...line('#555', 1.1)} /><path d="M1 2.500C1 1.500 1.500 1 2.500 1h6c1 0 1.500.5 1.500 1.500V4H1z" fill="#888" /><path d="M3 6h5M3 8h3" stroke="#666" /></svg>
              </Control>
            </LabelledField>
            <LabelledField label="Time:">
              <Control $h={25}>
                <ControlText $size={10} $ls={0.7} $color="#212529">--:-- --</ControlText>
                <svg width="13" height="13" viewBox="0 0 13 13" {...line('#333', 1.1)}><circle cx="6" cy="6.500" r="5.800" /><path d="M6 3v3.500H8.500" /></svg>
              </Control>
            </LabelledField>
          </Columns>
          <LabelledField label="Location Name:"><Control /></LabelledField>
          <LabelledField label="Image (optional):">
            <FileControl $h={25}>
              <FileButton><ControlText $size={10} $ls={-0.25} $color="#212529">Choose File</ControlText></FileButton>
              <ControlText $size={10} $ls={-0.24} $color="#212529">No file chosen</ControlText>
            </FileControl>
          </LabelledField>
          <Field $gap={6}>
            <Label $flush>Search and select location on map:</Label>
            <MapFrame>
              <MapDrawing />
              <ZoomControl>
                <ZoomButton><svg width="8" height="8" viewBox="0 0 8 8"><path d="M4 0v8M0 4h8" stroke="#000" strokeWidth="1.500" /></svg></ZoomButton>
                <ZoomButton><svg width="8" height="8" viewBox="0 0 8 8"><path d="M0 3.500h8" stroke="#000" strokeWidth="1.200" /></svg></ZoomButton>
              </ZoomControl>
              <SearchControl>
                <svg width="11" height="13" viewBox="0 0 11 13" fill="none" stroke="#000"><circle cx="5" cy="4" r="3.300" strokeWidth="1.300" /><path d="M6.700 7l2.300 5" strokeWidth="2" /></svg>
              </SearchControl>
              <Attribution>
                <svg width="7" height="5" viewBox="0 0 7 5"><path d="M0 0h7v2.500H0z" fill="#4c7be1" /><path d="M0 2.500h7V5H0z" fill="#ffd500" /></svg>
                <a>Leaflet</a><span>|</span><span>© OpenStreetMap contributors</span>
              </Attribution>
            </MapFrame>
          </Field>
          <Help>Search or click/drag on the map to set location.</Help>
          <Submit><Text $size={12.5} $ls={-0.42}>Submit Event</Text></Submit>
        </Card>
      </Viewport>

      <Taskbar>
        <Weather>
          <WeatherIcon />
          <Lines>
            <Text $size={15} $ls={-0.55}>27°C</Text>
            <Text $size={15} $ls={-0.15} $color="#cfcfcf">Mostly cloudy</Text>
          </Lines>
        </Weather>
        <StartButton>
          <svg width="30" height="30" viewBox="0 0 30 30"><defs><linearGradient id="wn" x2="1" y2="1"><stop stopColor="#8be0fb" /><stop offset=".5" stopColor="#3cc0f8" /><stop offset="1" stopColor="#0a8cf0" /></linearGradient></defs>
            <path d="M1 .5h13.300v14H1zM15.700.500H29v14H15.700zM1 15.800h13.300v13.700H1zM15.700 15.800H29v13.700H15.700z" fill="url(#wn)" /></svg>
        </StartButton>
        <SearchPill>
          <svg width="19" height="20" viewBox="0 0 19 20" {...line('#e6e6e6', 2)}><circle cx="8" cy="8" r="6.700" fill="#555" /><path d="M12.500 13.500l4.500 5" strokeWidth="2.400" /></svg>
          <Text $size={16} $color="#d0d0d0">Search</Text>
        </SearchPill>
        <Apps>
          {apps.map(a => (
            <AppSlot key={a.name} $active={a.active}>
              {a.icon}
              {a.run && <Running $active={a.active} />}
            </AppSlot>
          ))}
        </Apps>
        <Tray>
          <TraySlot $w={40}><svg width="14" height="8" viewBox="0 0 14 8" {...line('#fff', 1.6)}><path d="M1 7l6-6 6 6" /></svg></TraySlot>
          <TraySlot $w={52}><Text $size={14.5} $ls={-0.5}>ENG</Text></TraySlot>
          <TraySlot $w={30}><svg width="20" height="16" viewBox="0 0 20 16" {...line('#fff', 1.6)}><path d="M1 5.500c5-5.300 13-5.300 18 0M4 8.800c3.500-3.500 8.500-3.500 12 0M6.800 11.500c2-1.800 4.400-1.800 6.400 0" /><circle cx="10" cy="14" r="1" fill="#fff" /></svg></TraySlot>
          <TraySlot $w={30}><svg width="20" height="17" viewBox="0 0 20 17" {...line('#fff', 1.4)}><path d="M1 5.500h3L8.500 1.500v14L4 11.500H1z" /><path d="M11.500 6c1 1.500 1 3.500 0 5" /><path d="M14 3.500c2.500 3 2.500 7 0 10M16.500 1.500c3.500 4 3.500 10 0 14" stroke="#666" /></svg></TraySlot>
          <TraySlot $w={31}><svg width="21" height="18" viewBox="0 0 21 18" {...line('#fff', 1.5)}><path d="M10 4.500h6c1.300 0 2 .7 2 2v7c0 1.300-.7 2-2 2H3c-1 0-1.700-.4-2-1M19.500 8.500v3" /><path d="M7 .5c2.500 3.500 2 8-2 10.500-3.500-1-4.500-3-3.500-6 1 1 2 .5 2.500-.5S5.500 1.500 7 .5z" fill="#fff" strokeWidth=".8" /><path d="M5 7.500v6" strokeWidth="1.200" /></svg></TraySlot>
          <TraySlot $w={84} $end>
            <ClockLines $right>
              <Text $size={15} $ls={-0.42}>11:57 PM</Text>
              <Text $size={15} $ls={-0.2}>9/2/2025</Text>
            </ClockLines>
          </TraySlot>
          <svg width="18" height="20" viewBox="0 0 18 20"><path d="M2.500 15V8C2.500 4 5 1.500 8.500 1.500S14 4 14 8v7l1.500 2H.5zM6 18h5c-.5 2.500-4.500 2.500-5 0z" fill="#fff" />
            <path d="M5 7.500h4l-4 5h4M10.500 6h3l-3 4h3" fill="none" stroke="#1c1c1c" strokeWidth="1.300" /><path d="M13 1h4l-4 5h4" fill="none" stroke="#fff" strokeWidth="1.200" /></svg>
        </Tray>
      </Taskbar>
    </Screen>
  );
}
